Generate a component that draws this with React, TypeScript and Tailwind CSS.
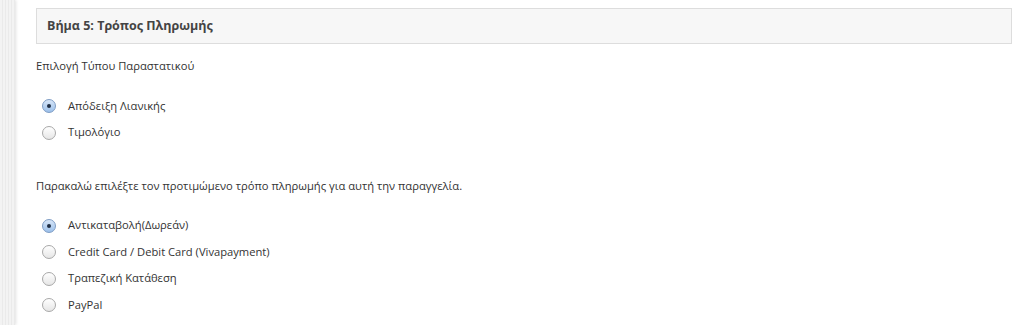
const font = { fontFamily: '"Open Sans", "Noto Sans", sans-serif' };

const Radio = ({ checked }: { checked?: boolean }) => (
  <span
    className={
      "flex h-[14px] w-[14px] items-center justify-center rounded-full border " +
      (checked
        ? "border-[#7d9cc4] bg-gradient-to-b from-[#d7e6f8] to-[#9cc0ea]"
        : "border-[#a8a8a8] bg-gradient-to-b from-[#ffffff] to-[#e6e6e6]")
    }
  >
    {checked && <span className="h-[4px] w-[4px] rounded-full bg-[#1e2d44]" />}
  </span>
);

const Option = ({ label, checked }: { label: string; checked?: boolean }) => (
  <label className="flex h-[26.5px] items-center">
    <span className="ml-[6px] w-[26px]">
      <Radio checked={checked} />
    </span>
    <span className="text-[11.2px] text-[#333]">{label}</span>
  </label>
);

export default function App() {
  return (
    <div className="flex h-[325px] w-[1024px] overflow-hidden bg-white" style={font}>
      <div className="w-[15px] shrink-0 bg-[#efefef] bg-[repeating-linear-gradient(90deg,#f3f3f3_0px,#f3f3f3_2px,#eaeaea_2px,#eaeaea_3px)] shadow-[1px_0_3px_rgba(0,0,0,0.12)]" />
      <div className="flex-1 pl-[21px] pr-[12px] pt-[8px]">
        <div className="flex h-[36px] items-center border border-[#dddddd] bg-[#f7f7f7] px-[10px]">
          <h2 className="text-[12.5px] font-bold text-[#444]">Βήμα 5: Τρόπος Πληρωμής</h2>
        </div>

        <p className="mt-[14px] text-[11.2px] text-[#333]">Επιλογή Τύπου Παραστατικού</p>
        <div className="mt-[18px] flex flex-col">
          <Option label="Απόδειξη Λιανικής" checked />
          <Option label="Τιμολόγιο" />
        </div>

        <p className="mt-[32px] text-[11.2px] text-[#333]">
          Παρακαλώ επιλέξτε τον προτιμώμενο τρόπο πληρωμής για αυτή την παραγγελία.
        </p>
        <div className="mt-[18px] flex flex-col">
          <Option label="Αντικαταβολή(Δωρεάν)" checked />
          <Option label="Credit Card / Debit Card (Vivapayment)" />
          <Option label="Τραπεζική Κατάθεση" />
          <Option label="PayPal" />
        </div>
      </div>
    </div>
  );
}
